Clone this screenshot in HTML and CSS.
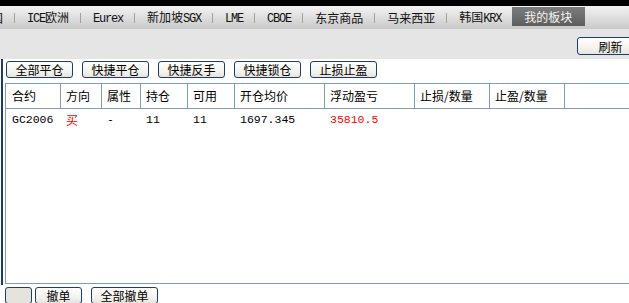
FILE: index.html
```html
<!DOCTYPE html>
<html lang="zh-CN">
<head>
    <meta charset="UTF-8">
    <title>持仓</title>
    <link rel="stylesheet" href="styles.css">
</head>
<body>
    <div class="page">
        <div class="topline"></div>
        <div class="tabs">
            <span class="tab first">国</span><i class="sep"></i>
            <span class="tab"><b class="en">ICE</b>欧洲</span><i class="sep"></i>
            <span class="tab"><b class="en">Eurex</b></span><i class="sep"></i>
            <span class="tab">新加坡<b class="en">SGX</b></span><i class="sep"></i>
            <span class="tab"><b class="en">LME</b></span><i class="sep"></i>
            <span class="tab"><b class="en">CBOE</b></span><i class="sep"></i>
            <span class="tab">东京商品</span><i class="sep"></i>
            <span class="tab">马来西亚</span><i class="sep"></i>
            <span class="tab">韩国<b class="en">KRX</b></span>
            <span class="tab active">我的板块</span>
        </div>

        <div class="graybar">
            <button class="btn refresh">刷新</button>
        </div>

        <div class="panel">
            <div class="toolbar">
                <button class="btn">全部平仓</button>
                <button class="btn">快捷平仓</button>
                <button class="btn">快捷反手</button>
                <button class="btn">快捷锁仓</button>
                <button class="btn">止损止盈</button>
            </div>

            <div class="grid">
                <div class="row head">
                    <div class="c c1">合约</div>
                    <div class="c c2">方向</div>
                    <div class="c c3">属性</div>
                    <div class="c c4">持仓</div>
                    <div class="c c5">可用</div>
                    <div class="c c6">开仓均价</div>
                    <div class="c c7">浮动盈亏</div>
                    <div class="c c8">止损/数量</div>
                    <div class="c c9">止盈/数量</div>
                    <div class="c c10"></div>
                </div>
                <div class="row data">
                    <div class="c c1 num">GC2006</div>
                    <div class="c c2 red">买</div>
                    <div class="c c3 num">-</div>
                    <div class="c c4 num">11</div>
                    <div class="c c5 num">11</div>
                    <div class="c c6 num">1697.345</div>
                    <div class="c c7 num red">35810.5</div>
                    <div class="c c8"></div>
                    <div class="c c9"></div>
                    <div class="c c10"></div>
                </div>
            </div>
        </div>

        <div class="bottombar">
            <button class="btn blank"></button>
            <button class="btn small">撤单</button>
            <button class="btn wide">全部撤单</button>
        </div>
    </div>
</body>
</html>
```

FILE: styles.css
```css
html, body {
    margin: 0;
    padding: 0;
    overflow: hidden;
    background: #fff;
}
body {
    font-family: "Noto Sans CJK SC", sans-serif;
    font-size: 12px;
    color: #000;
}
.page {
    width: 645px;
}
.topline {
    height: 6px;
    background: #000;
}

/* tabs */
.tabs {
    height: 23px;
    display: flex;
    align-items: center;
    background: linear-gradient(#f3f3f3, #c9c9c9);
    white-space: nowrap;
}
.tab {
    line-height: 23px;
    padding: 0 11px 0 12px;
    color: #111;
}
.tab.first {
    margin-left: -21px;
}
.tab.active {
    align-self: flex-start;
    margin-top: 1px;
    height: 19px;
    line-height: 19px;
    width: 49px;
    padding: 0 12px;
    background: linear-gradient(#7c7c7c, #5e5e5e);
    color: #f4f4f4;
}
.en {
    font-family: "Liberation Mono", monospace;
    font-weight: normal;
    letter-spacing: -1.2px;
}
.sep {
    width: 1px;
    height: 10px;
    background: #a2a2a2;
}

.graybar {
    height: 30px;
    background: #e5e5e5;
    padding-left: 577px;
    box-sizing: border-box;
    padding-top: 8px;
}

/* buttons */
.btn {
    font-family: "Noto Sans CJK SC", sans-serif;
    font-size: 12px;
    line-height: 15px;
    height: 17px;
    width: 67px;
    padding: 0;
    margin: 0;
    border: 1px solid #1d3d6b;
    border-radius: 3px;
    background: linear-gradient(#ffffff, #f4f3ef 60%, #e6e4dc);
    color: #000;
    display: block;
}
.btn.refresh {
    height: 18px;
}

.panel {
    margin-left: 1px;
    border-left: 2px solid #1e3a66;
    padding: 0 0 1px 1px;
}
.toolbar {
    display: flex;
    gap: 9px;
    padding: 2px 0 0 2px;
    margin-bottom: 5px;
}

/* grid */
.grid {
    margin-left: 1px;
    height: 201px;
    box-sizing: border-box;
    border: 1px solid #7b9cbe;
}
.row {
    display: flex;
}
.row.head {
    height: 25px;
    border-bottom: 1px solid #7b9cbe;
    box-sizing: border-box;
}
.row.head .c {
    line-height: 24px;
    border-right: 1px solid #7b9cbe;
}
.row.data .c {
    line-height: 22px;
}
.c {
    box-sizing: border-box;
    padding-left: 5px;
    white-space: nowrap;
}
.c1 { width: 55px; padding-left: 6px; }
.c2 { width: 41px; }
.c3 { width: 39px; }
.c4 { width: 47px; }
.c5 { width: 47px; }
.c6 { width: 90px; }
.c7 { width: 90px; }
.c8 { width: 75px; }
.c9 { width: 75px; }
.c10 { flex: 1; border-right: none !important; }
.num {
    font-family: "Liberation Mono", monospace;
    font-size: 11.5px;
}
.red {
    color: #ff0000;
}

.bottombar {
    display: flex;
    padding: 2px 0 0 5px;
}
.btn.blank {
    width: 27px;
    background: #e4e3dc;
    margin-right: 3px;
}
.btn.small {
    width: 47px;
    margin-right: 9px;
}
```
